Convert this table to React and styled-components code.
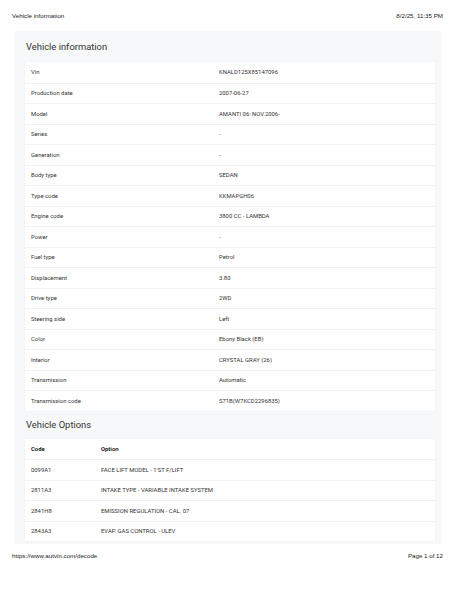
import React from 'react';
import styled, { createGlobalStyle } from 'styled-components';

const GlobalStyle = createGlobalStyle`
  html, body {
    margin: 0;
    padding: 0;
    background: #fff;
  }
  body {
    font-family: Roboto, "Liberation Sans", Arial, sans-serif;
    color: #333;
  }
`;

const Page = styled.div`
  width: 456px;
  height: 590px;
  display: flex;
  flex-direction: column;
  box-sizing: border-box;
`;

const PrintBar = styled.div`
  display: flex;
  justify-content: space-between;
  align-items: flex-start;
  height: ${({ top }) => (top ? '31px' : '24px')};
  padding: ${({ top }) => (top ? '12px' : '8px')} 13px 0 12px;
  font-family: "Liberation Sans", Arial, sans-serif;
  font-size: 6.2px;
  color: #222;
  box-sizing: border-box;
`;

const Card = styled.div`
  margin: 0 15px 0 14px;
  background: #f7f8f9;
  padding: 0 6px 3px 11px;
  box-sizing: border-box;
`;

const Title = styled.h2`
  margin: 0;
  font-weight: 400;
  font-size: 9.4px;
  color: #333;
  line-height: 31px;
  height: 31px;
  padding-left: 1px;
`;

const SubTitle = styled(Title)`
  line-height: 28px;
  height: 28px;
`;

const Table = styled.div`
  background: #fff;
  box-shadow: 0 0 2px rgba(0, 0, 0, 0.05);
`;

const Row = styled.div`
  display: grid;
  grid-template-columns: ${({ options }) => (options ? '70px 1fr' : '188px 1fr')};
  align-items: center;
  height: 20.5px;
  padding-left: 6px;
  font-size: 5.9px;
  color: #333;
  border-top: ${({ first }) => (first ? 'none' : '0.5px solid #f1f1f1')};
  box-sizing: border-box;
  ${({ head }) => head && 'font-weight: 700; color: #222; box-shadow: 0 1px 1px rgba(0,0,0,0.04);'}
`;

const info = [
  ['Vin', 'KNALD125X85147096'],
  ['Production date', '2007-06-27'],
  ['Model', 'AMANTI 06: NOV.2006-'],
  ['Series', '-'],
  ['Generation', '-'],
  ['Body type', 'SEDAN'],
  ['Type code', 'KKMAPGH06'],
  ['Engine code', '3800 CC - LAMBDA'],
  ['Power', '-'],
  ['Fuel type', 'Petrol'],
  ['Displacement', '3.80'],
  ['Drive type', '2WD'],
  ['Steering side', 'Left'],
  ['Color', 'Ebony Black (EB)'],
  ['Interior', 'CRYSTAL GRAY (26)'],
  ['Transmission', 'Automatic'],
  ['Transmission code', 'S71B(W7KCD2296835)'],
];

const options = [
  ['0099A1', "FACE LIFT MODEL - 1'ST F/LIFT"],
  ['2811A3', 'INTAKE TYPE - VARIABLE INTAKE SYSTEM'],
  ['2841H8', 'EMISSION REGULATION - CAL. 07'],
  ['2843A3', 'EVAP. GAS CONTROL - ULEV'],
];

export default function App() {
  return (
    <>
      <GlobalStyle />
      <Page>
        <PrintBar top>
          <span>Vehicle information</span>
          <span>8/2/25, 11:35 PM</span>
        </PrintBar>
        <Card>
          <Title>Vehicle information</Title>
          <Table>
            {info.map(([k, v], i) => (
              <Row key={k} first={i === 0}>
                <span>{k}</span>
                <span>{v}</span>
              </Row>
            ))}
          </Table>
          <SubTitle>Vehicle Options</SubTitle>
          <Table>
            <Row options head first>
              <span>Code</span>
              <span>Option</span>
            </Row>
            {options.map(([c, o]) => (
              <Row options key={c}>
                <span>{c}</span>
                <span>{o}</span>
              </Row>
            ))}
          </Table>
        </Card>
        <PrintBar>
          <span>https://www.autvin.com/decode</span>
          <span>Page 1 of 12</span>
        </PrintBar>
      </Page>
    </>
  );
}
